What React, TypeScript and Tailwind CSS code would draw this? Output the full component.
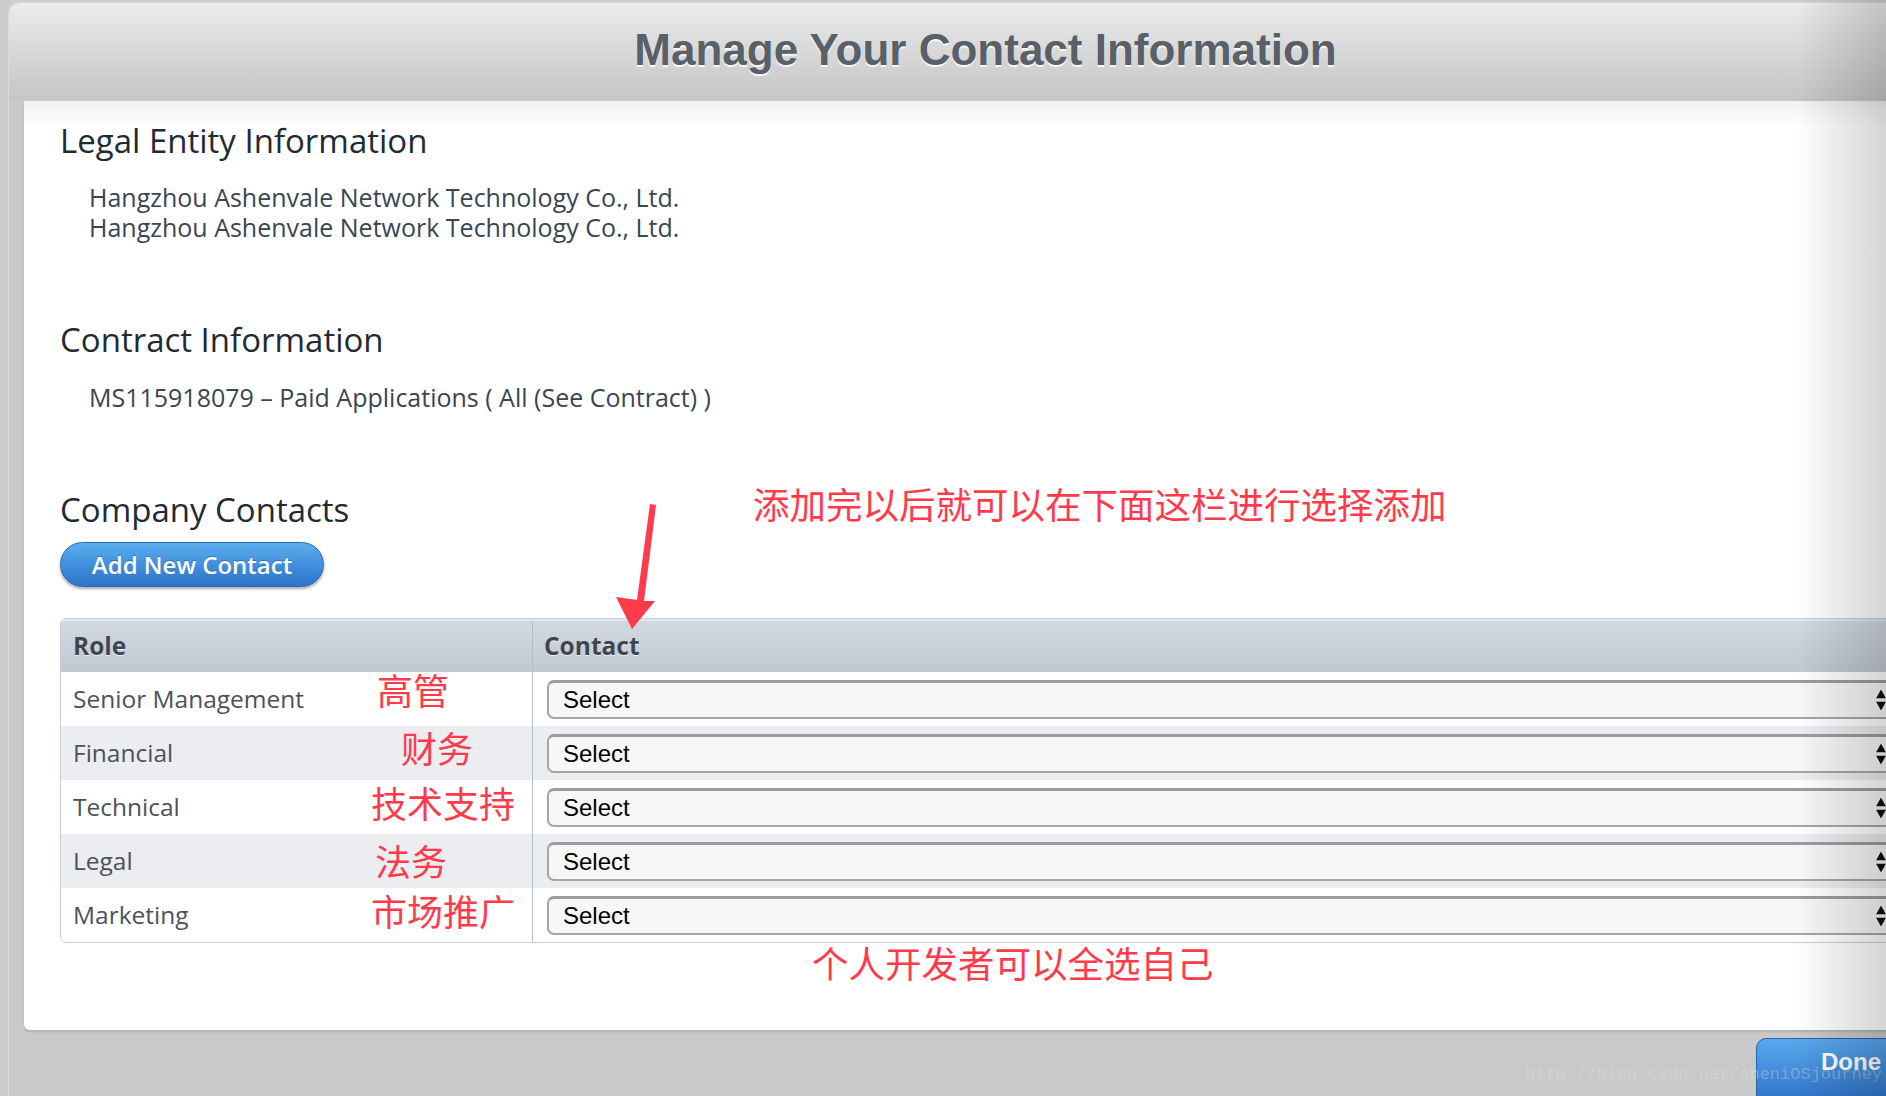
import React from 'react';

const rows = [
  { role: 'Senior Management', note: '高管', noteClass: 'left-[316px] top-[-1px]', bg: 'bg-white' },
  { role: 'Financial', note: '财务', noteClass: 'left-[340px] top-[3px]', bg: 'bg-[#ebedf0]' },
  { role: 'Technical', note: '技术支持', noteClass: 'left-[310px] top-[4px]', bg: 'bg-white' },
  { role: 'Legal', note: '法务', noteClass: 'left-[314px] top-[8px]', bg: 'bg-[#ebedf0]' },
  { role: 'Marketing', note: '市场推广', noteClass: 'left-[310px] top-[4px]', bg: 'bg-white' },
];

const cjk = "font-['Noto_Sans_CJK_SC',sans-serif]";

function SelectBox() {
  return (
    <div className="relative ml-[14px] flex h-[39px] flex-1 items-center rounded-[7px] border-2 border-t-[3px] border-[#a6a6a6] border-t-[#9c9c9c] bg-[#f7f7f7] pl-[14px] font-['Liberation_Sans',Arial,sans-serif] text-[24px] text-black">
      Select
      <div className="absolute right-[8px] top-1/2 flex -translate-y-1/2 flex-col gap-[3px]">
        <svg width="10" height="9" viewBox="0 0 10 9">
          <polygon points="5,0 10,9 0,9" fill="#111" />
        </svg>
        <svg width="10" height="9" viewBox="0 0 10 9">
          <polygon points="0,0 10,0 5,9" fill="#111" />
        </svg>
      </div>
    </div>
  );
}

export default function App() {
  return (
    <div className="relative h-[1096px] w-[1886px] overflow-hidden bg-[#cdcdcd] font-['Open_Sans',sans-serif]">
      <div className="ml-[8px] mt-[2px] flex h-[1094px] w-[1954px] flex-col overflow-hidden rounded-tl-[10px] border-l border-t border-[#dadada] bg-[#c9c9c9]">
        {/* header */}
        <div className="flex h-[98px] shrink-0 items-center justify-center rounded-tl-[10px] bg-gradient-to-b from-[#ebebeb] to-[#c5c5c5] pb-[4px]">
          <h1 className="font-['Liberation_Sans',Arial,sans-serif] text-[44px] font-bold text-[#596068] [text-shadow:0_2px_1px_rgba(255,255,255,0.85)]">
            Manage Your Contact Information
          </h1>
        </div>

        {/* card */}
        <div className="relative mx-[15px] flex h-[929px] shrink-0 flex-col rounded-bl-[6px] bg-[linear-gradient(to_bottom,#f1f1f1,#ffffff_26px)] px-[36px] pt-[23px] shadow-[0_2px_2px_rgba(0,0,0,0.12)]">
          <h2 className="text-[33px] leading-[34px] text-[#222a33]">Legal Entity Information</h2>
          <div className="mt-[24px] pl-[29px] text-[25px] leading-[30px] text-[#3b4552]">
            <p>Hangzhou Ashenvale Network Technology Co., Ltd.</p>
            <p>Hangzhou Ashenvale Network Technology Co., Ltd.</p>
          </div>

          <h2 className="mt-[81px] text-[33px] leading-[34px] text-[#222a33]">Contract Information</h2>
          <p className="mt-[25px] pl-[29px] text-[25px] leading-[30px] text-[#3b4552]">
            MS115918079 – Paid Applications ( All (See Contract) )
          </p>

          <h2 className="mt-[81px] text-[33px] leading-[34px] text-[#222a33]">Company Contacts</h2>
          <div className="mt-[15px]">
            <button className="h-[45px] w-[264px] rounded-full border border-[#2b68b4] bg-gradient-to-b from-[#5aaeef] to-[#2c72ca] text-[24px] font-semibold text-white shadow-[0_2px_3px_rgba(0,0,0,0.35)] [text-shadow:0_-1px_0_rgba(0,0,0,0.25)]">
              Add New Contact
            </button>
          </div>

          {/* table */}
          <div className="mt-[31px] overflow-hidden rounded-l-[6px] border border-[#c6ccd4]">
            <div className="flex h-[53px] border-t-2 border-[#e4e8ec] bg-gradient-to-b from-[#d2d9e1] to-[#c1c8d2] text-[24.5px] font-bold text-[#3e4650] [text-shadow:0_1px_0_rgba(255,255,255,0.7)]">
              <div className="flex w-[472px] items-center border-r border-[#b5bcc6] pl-[12px]">Role</div>
              <div className="flex items-center pl-[11px]">Contact</div>
            </div>
            {rows.map((r) => (
              <div key={r.role} className={`flex h-[54px] ${r.bg}`}>
                <div className="relative flex w-[472px] items-center border-r border-[#b5bcc6] pl-[12px] text-[24.5px] text-[#4d5258]">
                  {r.role}
                  <span className={`absolute ${r.noteClass} ${cjk} text-[36px] leading-[36px] text-[#ff3a4b]`}>{r.note}</span>
                </div>
                <div className="flex flex-1 items-center pr-[14px]">
                  <SelectBox />
                </div>
              </div>
            ))}
          </div>

          <p className={`mt-[2px] pl-[752px] ${cjk} text-[36.5px] leading-[36px] text-[#ff3a4b]`}>个人开发者可以全选自己</p>

          {/* annotation */}
          <p className={`absolute left-[729px] top-[385px] ${cjk} text-[36.5px] leading-[36px] text-[#ff3a4b]`}>
            添加完以后就可以在下面这栏进行选择添加
          </p>
          <svg className="absolute left-[586px] top-[400px]" width="50" height="132" viewBox="0 0 50 132">
            <polygon points="40,3 46,4 34,100 45,100 22,128 6,96 27,99" fill="#ff3a4b" />
          </svg>
        </div>

        {/* bottom bar */}
        <div className="flex shrink-0 justify-end pr-[46px] pt-[8px]">
          <div className="flex h-[70px] w-[160px] items-start rounded-tl-[10px] border border-[#2762ab] bg-gradient-to-b from-[#5aa8ee] to-[#2a6ec6] pl-[64px] pt-[5px] font-['Liberation_Sans',Arial,sans-serif] text-[24px] font-bold text-white">
            Done
          </div>
        </div>
      </div>

      {/* watermark */}
      <div className="absolute left-[1525px] top-[1062px] font-['Liberation_Mono',monospace] text-[17px] text-[rgba(235,225,205,0.35)]">
        http://blog.csdn.net/cheniOSjourney
      </div>

      {/* right edge shade */}
      <div className="pointer-events-none absolute right-0 top-0 h-full w-[90px] bg-gradient-to-r from-transparent to-[rgba(0,0,0,0.17)]" />
    </div>
  );
}
